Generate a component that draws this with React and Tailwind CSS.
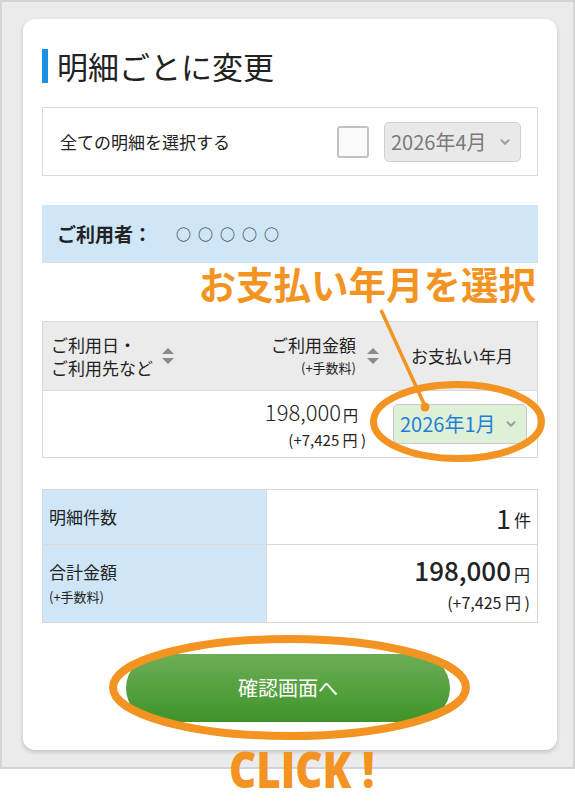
import { ChevronDown } from "lucide-react";

const SortIcon = () => (
  <svg width="14" height="18" viewBox="0 0 14 18" className="shrink-0">
    <path d="M7 1 L13 7 H1 Z" fill="#8a8a8a" />
    <path d="M1 11 H13 L7 17 Z" fill="#8a8a8a" />
  </svg>
);

const Overlay = () => (
  <svg
    width="575"
    height="809"
    viewBox="0 0 575 809"
    className="pointer-events-none absolute left-0 top-0"
  >
    {/* select highlight */}
    <ellipse cx="457.5" cy="421.5" rx="84" ry="37" fill="none" stroke="#f39322" strokeWidth="7" />
    <line x1="381" y1="310" x2="425" y2="406" stroke="#f39322" strokeWidth="3.5" />
    <circle cx="425" cy="407" r="4.5" fill="#f39322" />
    {/* button highlight */}
    <ellipse cx="289.5" cy="687.5" rx="176.5" ry="48.5" fill="none" stroke="#f39322" strokeWidth="8" />
  </svg>
);

export default function App() {
  return (
    <div
      className="relative h-[809px] w-[575px] overflow-hidden bg-white text-[#222]"
      style={{ fontFamily: '"Noto Sans CJK JP", "Noto Sans", sans-serif' }}
    >
      <div className="h-[769px] w-[575px] border-2 border-[#d4d4d4] bg-[#ebebeb] pl-[21px] pt-[17px]">
        {/* Card */}
        <div className="flex h-[731px] w-[534px] flex-col rounded-[12px] bg-white px-[19px] pt-[30px] shadow-[0_2px_4px_rgba(0,0,0,0.18)]">
          {/* Title */}
          <div className="flex h-[34px] items-center">
            <span className="h-[34px] w-[6px] bg-[#1e8fe6]"></span>
            <h1 className="ml-[9px] text-[31px] leading-[34px] font-normal">
              明細ごとに変更
            </h1>
          </div>

          {/* Select all */}
          <div className="mt-[24px] flex h-[69px] items-center border border-[#dcdcdc] pl-[17px] pr-[16px]">
            <span className="flex-1 text-[17px]">全ての明細を選択する</span>
            <span className="h-[32px] w-[32px] rounded-[3px] border-2 border-[#c2c2c2] bg-[#fafafa]"></span>
            <div className="ml-[15px] flex h-[40px] w-[137px] items-center rounded-[5px] border border-[#cfcfcf] bg-[#e9e9e9] pl-[6px] pr-[8px]">
              <span className="flex-1 text-[20px] text-[#7a7a7a]">2026年4月</span>
              <ChevronDown size={14} strokeWidth={3.5} color="#a0a0a0" />
            </div>
          </div>

          {/* User band */}
          <div className="mt-[29px] flex h-[58px] items-center bg-[#cfe6f8] pl-[15px]">
            <span className="text-[19px] font-bold">ご利用者：</span>
            <span className="ml-[24px] text-[15px] tracking-[7px]">○○○○○</span>
          </div>

          {/* Annotation */}
          <div className="flex h-[58px] justify-end pr-[2px] pt-[1px]">
            <span className="text-[37.5px] leading-none font-bold text-[#f39322]">
              お支払い年月を選択
            </span>
          </div>

          {/* Detail table */}
          <div className="border border-[#d9d9d9]">
            <div className="flex h-[68px] items-center bg-[#ebebeb]">
              <div className="flex flex-1 items-center pl-[8px]">
                <div className="text-[17px] leading-[23px]">
                  <div>ご利用日・</div>
                  <div>ご利用先など</div>
                </div>
                <div className="ml-[8px]">
                  <SortIcon />
                </div>
              </div>
              <div className="flex items-center pr-[7px]">
                <div className="text-right">
                  <div className="text-[17px] leading-[23px]">ご利用金額</div>
                  <div className="text-[13px] leading-[23px]">(+手数料)</div>
                </div>
                <div className="ml-[10px]">
                  <SortIcon />
                </div>
              </div>
              <div className="w-[150px] text-center text-[17px]">お支払い年月</div>
            </div>
            <div className="flex h-[67px] items-center border-t border-[#d9d9d9] bg-white">
              <div className="flex-1 pr-[21px] text-right">
                <div className="pr-[8px] leading-[28px]">
                  <span className="text-[22px] font-light">198,000</span>
                  <span className="ml-[2px] text-[15px]">円</span>
                </div>
                <div className="text-[15px] leading-[22px]">(+7,425 円 )</div>
              </div>
              <div className="flex w-[150px] justify-center pr-[4px]">
                <div className="flex h-[40px] w-[134px] items-center rounded-[5px] border border-[#c9c9c9] bg-[#dff0d8] pl-[6px] pr-[8px]">
                  <span className="flex-1 text-[20px] text-[#1f7fd6]">2026年1月</span>
                  <ChevronDown size={14} strokeWidth={3.5} color="#a0a0a0" />
                </div>
              </div>
            </div>
          </div>

          {/* Summary */}
          <div className="mt-[31px] border border-[#d9d9d9]">
            <div className="flex h-[54px]">
              <div className="flex w-[223px] items-center bg-[#cfe6f8] pl-[6px] text-[17px]">
                明細件数
              </div>
              <div className="flex flex-1 items-center justify-end border-l border-[#d9d9d9] pr-[6px]">
                <span className="text-[27px] leading-none">1</span>
                <span className="ml-[3px] mt-[6px] text-[17px]">件</span>
              </div>
            </div>
            <div className="flex h-[78px] border-t border-[#d9d9d9]">
              <div className="flex w-[223px] flex-col justify-center bg-[#cfe6f8] pl-[6px]">
                <div className="text-[17px] leading-[26px]">合計金額</div>
                <div className="text-[13px] leading-[24px]">(+手数料)</div>
              </div>
              <div className="flex flex-1 flex-col items-end justify-center border-l border-[#d9d9d9] pr-[7px]">
                <div className="leading-[32px]">
                  <span className="text-[26px] font-medium">198,000</span>
                  <span className="ml-[3px] text-[16px]">円</span>
                </div>
                <div className="text-[16px] leading-[24px]">(+7,425 円 )</div>
              </div>
            </div>
          </div>

          {/* Button */}
          <div className="mt-[31px] flex justify-center">
            <button className="ml-[-4px] h-[68px] w-[324px] rounded-full bg-linear-to-b from-[#6cae56] to-[#3d9427] text-[20px] text-white">
              確認画面へ
            </button>
          </div>
        </div>
      </div>

      <Overlay />

      {/* CLICK annotation */}
      <div
        className="absolute left-[229px] top-[744px] origin-left scale-x-[0.84] text-[50px] leading-none font-extrabold text-[#f39322]"
        style={{ fontFamily: '"Open Sans", sans-serif' }}
      >
        CLICK !
      </div>
    </div>
  );
}
